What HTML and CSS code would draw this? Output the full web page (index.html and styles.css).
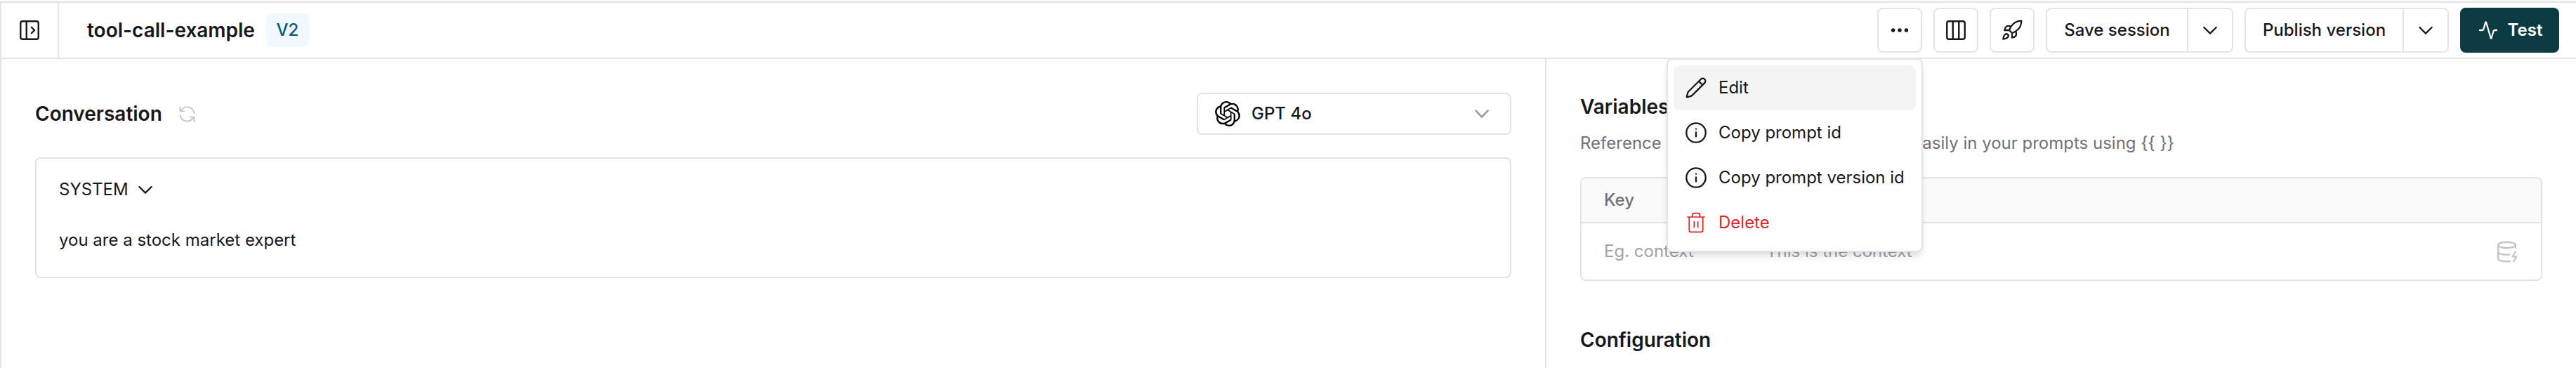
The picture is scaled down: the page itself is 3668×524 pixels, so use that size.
FILE: index.html
```html
<!DOCTYPE html>
<html lang="en">
<head>
<meta charset="utf-8">
<title>tool-call-example</title>
<link rel="stylesheet" href="styles.css">
</head>
<body>
<div class="app">
  <header class="header">
    <button class="toggle" aria-label="Toggle sidebar">
      <svg class="ic34" viewBox="0 0 24 24"><rect x="3" y="3" width="18" height="18" rx="2"/><path d="M9 3v18M14 9l3 3-3 3"/></svg>
    </button>
    <h1 class="title">tool-call-example</h1>
    <span class="badge">V2</span>
    <div class="actions">
      <div class="more-wrap">
        <button class="btn square" aria-label="More">
          <svg class="ic32 solid" viewBox="0 0 32 32"><circle cx="6.6" cy="16" r="2.7"/><circle cx="16" cy="16" r="2.7"/><circle cx="25.4" cy="16" r="2.7"/></svg>
        </button>
        <div class="menu">
          <div class="item active"><svg class="ic32" viewBox="0 0 24 24"><path d="M21.174 6.812a1 1 0 0 0-3.986-3.987L3.842 16.174a2 2 0 0 0-.5.83l-1.321 4.352a.5.5 0 0 0 .623.622l4.353-1.32a2 2 0 0 0 .83-.497zM15 5l4 4"/></svg><span>Edit</span></div>
          <div class="item"><svg class="ic32" viewBox="0 0 24 24"><circle cx="12" cy="12" r="10.3"/><path d="M12 16.2v-4.7M12 8h.01"/></svg><span>Copy prompt id</span></div>
          <div class="item"><svg class="ic32" viewBox="0 0 24 24"><circle cx="12" cy="12" r="10.3"/><path d="M12 16.2v-4.7M12 8h.01"/></svg><span>Copy prompt version id</span></div>
          <div class="item danger"><svg class="ic32 thin" viewBox="0 0 24 24"><path d="M3 6h18M19.3 6v14.2c0 1-.8 1.8-1.8 1.8h-11c-1 0-1.800-.8-1.800-1.800V6M8 6V3.800c0-1 .8-1.800 1.800-1.800h4.400c1 0 1.800.8 1.800 1.800V6M10 11v6M14 11v6"/></svg><span>Delete</span></div>
        </div>
      </div>
      <button class="btn square" aria-label="Columns">
        <svg class="ic34" viewBox="0 0 24 24"><rect x="3" y="3" width="18" height="18" rx="2"/><path d="M9 3v18M15 3v18"/></svg>
      </button>
      <button class="btn square" aria-label="Deploy">
        <svg class="ic32" viewBox="0 0 24 24"><path d="M4.500 16.500c-1.500 1.260-2 5-2 5s3.740-.5 5-2c.71-.84.7-2.130-.09-2.910a2.180 2.180 0 0 0-2.910-.09zM12 15l-3-3a22 22 0 0 1 2-3.950A12.880 12.880 0 0 1 22 2c0 2.720-.78 7.500-6 11a22.350 22.350 0 0 1-4 2zM9 12H4s.55-3.030 2-4c1.620-1.080 5 0 5 0M12 15v5s3.030-.55 4-2c1.080-1.620 0-5 0-5"/></svg>
      </button>
      <div class="btn split save"><span class="label">Save session</span><span class="drop"><svg class="ic32" viewBox="0 0 24 24"><path d="M5.500 9l6.500 6.500L18.500 9"/></svg></span></div>
      <div class="btn split publish"><span class="label">Publish version</span><span class="drop"><svg class="ic32" viewBox="0 0 24 24"><path d="M5.500 9l6.500 6.500L18.500 9"/></svg></span></div>
      <button class="btn test"><svg class="ic32" viewBox="0 0 24 24"><path d="M3 12h2.300c1 0 1.500-.4 1.800-1.300L9.100 3.600c.1-.4.6-.4.7 0l4.900 16.800c.1.4.6.4.7 0l2.100-7.100c.3-.9.800-1.300 1.700-1.300H21"/></svg><span>Test</span></button>
    </div>
  </header>
  <div class="body">
    <main class="left">
      <div class="bar">
        <h2>Conversation</h2>
        <svg class="refresh" viewBox="0 0 24 24"><path d="M21 11a9 9 0 0 0-16-4.500L3 8.300M3 3v5.300h5.300M3 13a9 9 0 0 0 16 4.500l2-1.800M21 21v-5.300h-5.300"/></svg>
        <div class="select">
          <svg class="openai" viewBox="0 0 24 24"><path d="M22.282 9.821a5.985 5.985 0 0 0-.516-4.910 6.046 6.046 0 0 0-6.510-2.900A6.065 6.065 0 0 0 4.981 4.180a5.985 5.985 0 0 0-3.998 2.900 6.046 6.046 0 0 0 .743 7.097 5.980 5.980 0 0 0 .510 4.911 6.051 6.051 0 0 0 6.515 2.900A5.985 5.985 0 0 0 13.260 24a6.056 6.056 0 0 0 5.772-4.206 5.990 5.990 0 0 0 3.997-2.900 6.056 6.056 0 0 0-.747-7.073zM13.260 22.430a4.476 4.476 0 0 1-2.876-1.040l.141-.081 4.779-2.758a.795.795 0 0 0 .392-.681v-6.737l2.020 1.168a.071.071 0 0 1 .038.052v5.583a4.504 4.504 0 0 1-4.494 4.494zM3.600 18.304a4.470 4.470 0 0 1-.535-3.014l.142.085 4.783 2.759a.771.771 0 0 0 .780 0l5.843-3.369v2.332a.080.080 0 0 1-.033.062L9.740 19.950a4.500 4.500 0 0 1-6.140-1.646zM2.340 7.896a4.485 4.485 0 0 1 2.366-1.973V11.600a.766.766 0 0 0 .388.676l5.815 3.355-2.020 1.168a.076.076 0 0 1-.071 0l-4.830-2.786A4.504 4.504 0 0 1 2.340 7.872zm16.597 3.855l-5.833-3.387L15.119 7.200a.076.076 0 0 1 .071 0l4.830 2.791a4.494 4.494 0 0 1-.676 8.105v-5.678a.790.790 0 0 0-.407-.667zm2.010-3.023l-.141-.085-4.774-2.782a.776.776 0 0 0-.785 0L9.409 9.230V6.897a.066.066 0 0 1 .028-.061l4.830-2.787a4.500 4.500 0 0 1 6.680 4.660zm-12.640 4.135l-2.020-1.164a.080.080 0 0 1-.038-.057V6.075a4.500 4.500 0 0 1 7.375-3.453l-.142.080L8.704 5.460a.795.795 0 0 0-.393.681zm1.097-2.365l2.602-1.500 2.607 1.500v2.999l-2.597 1.500-2.607-1.500z"/></svg>
          <span>GPT 4o</span>
          <svg class="ic32 muted" viewBox="0 0 24 24"><path d="M5.500 8.500l6.500 7 6.500-7"/></svg>
        </div>
      </div>
      <section class="card">
        <div class="role"><span>SYSTEM</span><svg class="ic32" viewBox="0 0 24 24"><path d="M5.500 9l6.500 6.500L18.500 9"/></svg></div>
        <p class="msg">you are a stock market expert</p>
      </section>
    </main>
    <aside class="right">
      <h2>Variables</h2>
      <p class="desc"><span>Reference variables and set values</span> <span>easily in your prompts using {{ }}</span></p>
      <div class="table">
        <div class="row head"><span class="key">Key</span></div>
        <div class="row"><span class="key">Eg. context</span><span class="val">This is the context</span>
          <svg class="db" viewBox="0 0 24 24"><ellipse cx="12" cy="5" rx="9" ry="3"/><path d="M3 5v14a9 3 0 0 0 12 2.840M21 5v3M21 12l-3 5h4l-3 5M3 12a9 3 0 0 0 11.590 2.870"/></svg>
        </div>
      </div>
      <h2>Configuration</h2>
    </aside>
  </div>
</div>
</body>
</html>
```
FILE: styles.css
```css
* { box-sizing: border-box; margin: 0; padding: 0; }
body {
  background: #fafafa;
  color: #18181b;
  font: 400 24px/32px Inter, "Liberation Sans", sans-serif;
  overflow: hidden;
}
button { font: inherit; color: inherit; background: none; border: 0; }
svg { display: block; flex: none; fill: none; stroke: currentColor; stroke-width: 1.7; stroke-linecap: round; stroke-linejoin: round; }
h1, h2 { font-size: 28px; font-weight: 600; line-height: 40px; }
span, h1, h2 { white-space: nowrap; }
.ic32 { width: 32px; height: 32px; }
.ic34 { width: 34px; height: 34px; stroke-width: 1.7; }
.thin { stroke-width: 1.3; }
.solid { fill: currentColor; stroke: none; }

.app {
  margin-top: 2px;
  height: 522px;
  display: flex;
  flex-direction: column;
  background: #fff;
  border-top: 2px solid #e4e4e7;
  border-left: 2px solid #e4e4e7;
}
.header {
  flex: none;
  height: 80px;
  display: flex;
  align-items: center;
  padding-right: 24px;
  border-bottom: 2px solid #e4e4e7;
}
.toggle {
  width: 82px;
  height: 78px;
  display: grid;
  place-items: center;
  border-right: 2px solid #e4e4e7;
}
.title { width: 239px; margin-left: 40px; }
.badge {
  margin-left: 16px;
  width: 61px;
  height: 48px;
  line-height: 48px;
  text-align: center;
  border-radius: 8px;
  background: #f0f9ff;
  color: #075985;
  font-weight: 500;
}
.actions { margin-left: auto; display: flex; gap: 16px; }
.btn {
  height: 64px;
  display: flex;
  align-items: center;
  justify-content: center;
  border: 2px solid #e4e4e7;
  border-radius: 8px;
  font-weight: 500;
}
.square { width: 64px; }
.split .label { flex: 1; text-align: center; }
.drop {
  width: 64px;
  height: 60px;
  display: grid;
  place-items: center;
  border-left: 2px solid #e4e4e7;
}
.save { width: 267px; }
.publish { width: 291px; }
.test { width: 141px; gap: 12px; background: #0d3b43; border-color: #0d3b43; color: #fff; font-weight: 600; }

.more-wrap { position: relative; }
.menu {
  position: absolute;
  z-index: 2;
  top: 72px;
  right: -1px;
  width: 365px;
  padding: 8px;
  background: #fff;
  border: 2px solid #e4e4e7;
  border-radius: 8px;
  box-shadow: 0 8px 12px -2px rgba(0, 0, 0, .1), 0 4px 8px -4px rgba(0, 0, 0, .1);
}
.item {
  height: 64px;
  display: flex;
  align-items: center;
  gap: 16px;
  padding: 0 16px;
  border-radius: 8px;
}
.active { background: #f4f4f5; }
.danger { color: #dc2626; }

.body { flex: 1; display: flex; }
.left { width: 2200px; padding: 48px 48px 0; border-right: 2px solid #e4e4e7; }
.bar { display: flex; align-items: center; height: 60px; }
.refresh { width: 27px; height: 27px; margin-left: 22px; color: #c4c4c6; }
.select {
  margin-left: auto;
  width: 448px;
  height: 60px;
  display: flex;
  align-items: center;
  padding: 0 24px;
  border: 2px solid #e4e4e7;
  border-radius: 8px;
  font-weight: 500;
}
.select span { flex: 1; margin-left: 16px; }
.openai { width: 36px; height: 36px; fill: #000; stroke: none; }
.muted { color: #9b9b9d; stroke-width: 1.9; }
.card {
  height: 172px;
  margin-top: 32px;
  padding: 28px 32px;
  border: 2px solid #e4e4e7;
  border-radius: 8px;
}
.role { display: flex; align-items: center; gap: 8px; }
.msg { margin-top: 40px; }

.right { flex: 1; padding: 48px 48px 0 48px; }
.desc { display: flex; justify-content: space-between; width: 846px; margin-top: 16px; color: #71717a; }
.table {
  height: 148px;
  margin: 32px 0 64px;
  overflow: hidden;
  border: 2px solid #e4e4e7;
  border-radius: 8px;
}
.row { display: flex; align-items: center; height: 80px; padding: 0 32px; color: #a1a1aa; }
.head { height: 64px; background: #fafafa; border-bottom: 2px solid #e4e4e7; color: #71717a; font-weight: 500; }
.key { width: 231px; }
.db { width: 33px; height: 33px; margin-left: auto; color: #c4c4c6; }
```
